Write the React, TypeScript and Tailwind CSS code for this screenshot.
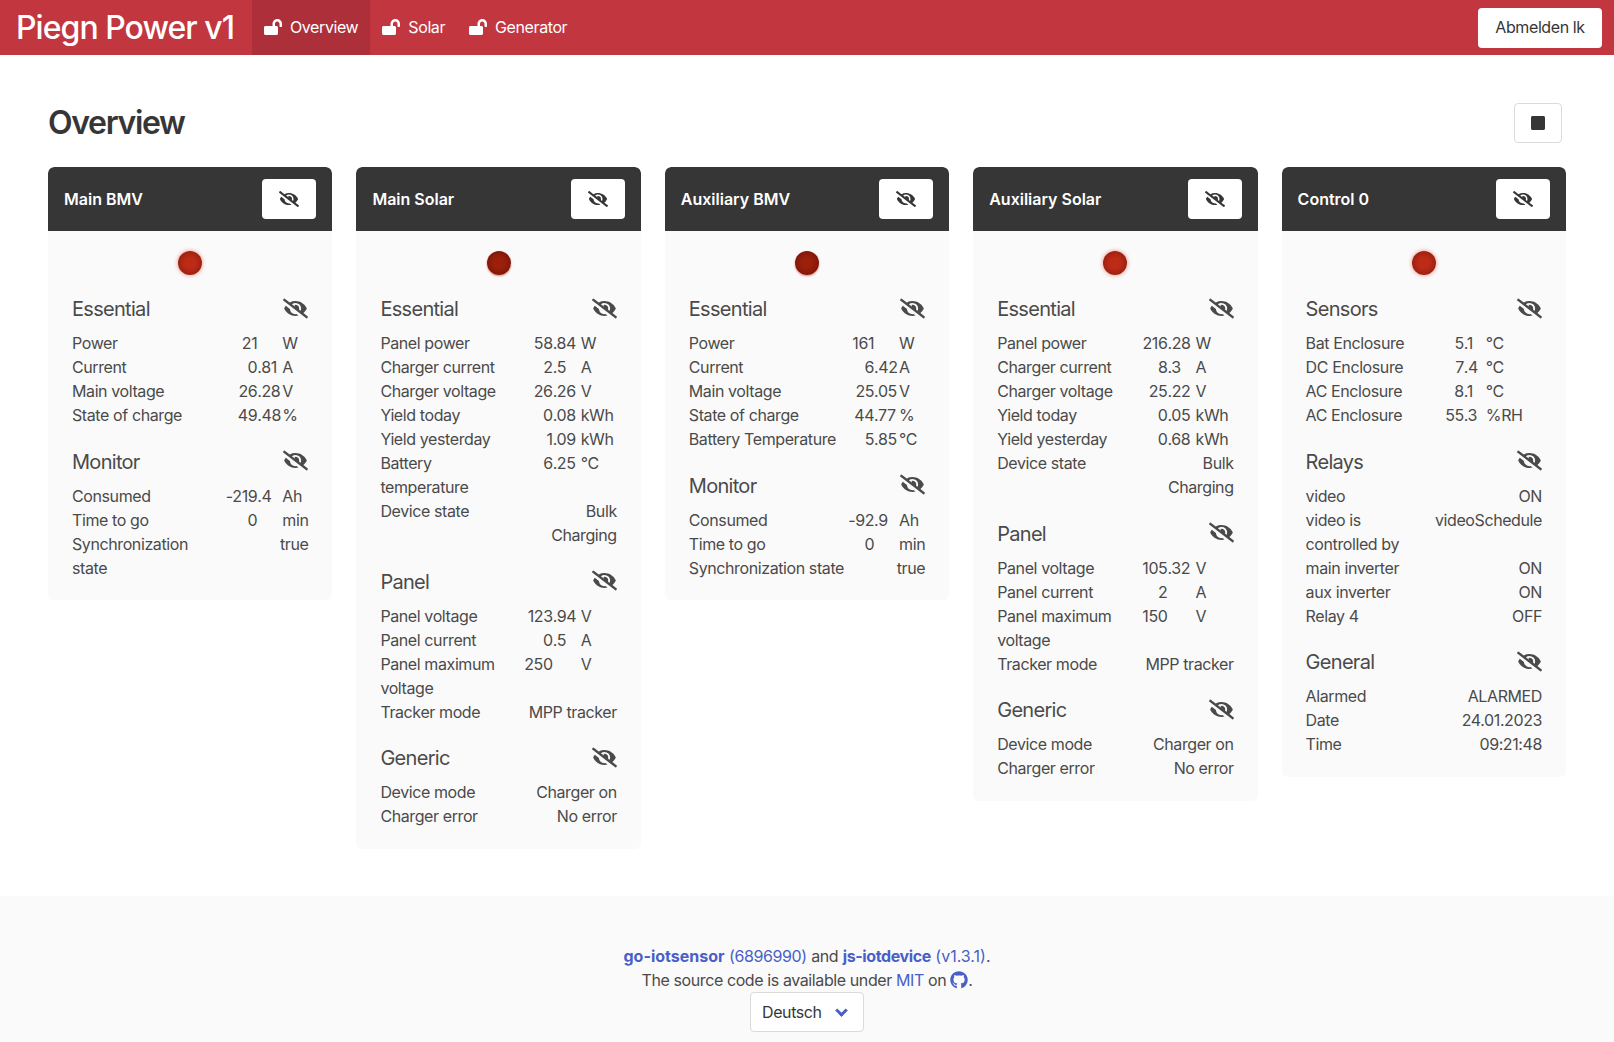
import React from 'react';
import { FaEyeSlash, FaGithub, FaLockOpen, FaStop } from 'react-icons/fa';

type Row = { label: string; value: string; unit?: string };
type Section = { title: string; rows: Row[] };
type Device = { name: string; led: string; cols: string[]; sections: Section[] };

const ledBright =
  'bg-[radial-gradient(circle_at_50%_50%,#bd2b17_30%,#86190d_100%)] shadow-[0_0_4px_rgba(225,70,50,0.65)]';
const ledDark =
  'bg-[radial-gradient(circle_at_50%_50%,#9c1f0a_30%,#6b140a_100%)] shadow-[0_1px_2px_rgba(235,90,70,0.8)]';

const devices: Device[] = [
  {
    name: 'Main BMV',
    led: ledBright,
    cols: ['w-[149px]', 'w-[36px]', 'w-[25px]', 'w-[26px]'],
    sections: [
      {
        title: 'Essential',
        rows: [
          { label: 'Power', value: '21', unit: 'W' },
          { label: 'Current', value: '0.81', unit: 'A' },
          { label: 'Main voltage', value: '26.28', unit: 'V' },
          { label: 'State of charge', value: '49.48', unit: '%' },
        ],
      },
      {
        title: 'Monitor',
        rows: [
          { label: 'Consumed', value: '-219.4', unit: 'Ah' },
          { label: 'Time to go', value: '0', unit: 'min' },
          { label: 'Synchronization state', value: 'true' },
        ],
      },
    ],
  },
  {
    name: 'Main Solar',
    led: ledDark,
    cols: ['w-[136px]', 'w-[36px]', 'w-[28px]', 'w-[36px]'],
    sections: [
      {
        title: 'Essential',
        rows: [
          { label: 'Panel power', value: '58.84', unit: 'W' },
          { label: 'Charger current', value: '2.5', unit: 'A' },
          { label: 'Charger voltage', value: '26.26', unit: 'V' },
          { label: 'Yield today', value: '0.08', unit: 'kWh' },
          { label: 'Yield yesterday', value: '1.09', unit: 'kWh' },
          { label: 'Battery temperature', value: '6.25', unit: '°C' },
          { label: 'Device state', value: 'Bulk\nCharging' },
        ],
      },
      {
        title: 'Panel',
        rows: [
          { label: 'Panel voltage', value: '123.94', unit: 'V' },
          { label: 'Panel current', value: '0.5', unit: 'A' },
          { label: 'Panel maximum voltage', value: '250', unit: 'V' },
          { label: 'Tracker mode', value: 'MPP tracker' },
        ],
      },
      {
        title: 'Generic',
        rows: [
          { label: 'Device mode', value: 'Charger on' },
          { label: 'Charger error', value: 'No error' },
        ],
      },
    ],
  },
  {
    name: 'Auxiliary BMV',
    led: ledDark,
    cols: ['w-[157px]', 'w-[28px]', 'w-[25px]', 'w-[26px]'],
    sections: [
      {
        title: 'Essential',
        rows: [
          { label: 'Power', value: '161', unit: 'W' },
          { label: 'Current', value: '6.42', unit: 'A' },
          { label: 'Main voltage', value: '25.05', unit: 'V' },
          { label: 'State of charge', value: '44.77', unit: '%' },
          { label: 'Battery Temperature', value: '5.85', unit: '°C' },
        ],
      },
      {
        title: 'Monitor',
        rows: [
          { label: 'Consumed', value: '-92.9', unit: 'Ah' },
          { label: 'Time to go', value: '0', unit: 'min' },
          { label: 'Synchronization state', value: 'true' },
        ],
      },
    ],
  },
  {
    name: 'Auxiliary Solar',
    led: ledBright,
    cols: ['w-[134px]', 'w-[36px]', 'w-[28px]', 'w-[38px]'],
    sections: [
      {
        title: 'Essential',
        rows: [
          { label: 'Panel power', value: '216.28', unit: 'W' },
          { label: 'Charger current', value: '8.3', unit: 'A' },
          { label: 'Charger voltage', value: '25.22', unit: 'V' },
          { label: 'Yield today', value: '0.05', unit: 'kWh' },
          { label: 'Yield yesterday', value: '0.68', unit: 'kWh' },
          { label: 'Device state', value: 'Bulk\nCharging' },
        ],
      },
      {
        title: 'Panel',
        rows: [
          { label: 'Panel voltage', value: '105.32', unit: 'V' },
          { label: 'Panel current', value: '2', unit: 'A' },
          { label: 'Panel maximum voltage', value: '150', unit: 'V' },
          { label: 'Tracker mode', value: 'MPP tracker' },
        ],
      },
      {
        title: 'Generic',
        rows: [
          { label: 'Device mode', value: 'Charger on' },
          { label: 'Charger error', value: 'No error' },
        ],
      },
    ],
  },
  {
    name: 'Control 0',
    led: ledBright,
    cols: ['w-[122px]', 'w-[36px]', 'w-[22px]', 'w-[56px]'],
    sections: [
      {
        title: 'Sensors',
        rows: [
          { label: 'Bat Enclosure', value: '5.1', unit: '°C' },
          { label: 'DC Enclosure', value: '7.4', unit: '°C' },
          { label: 'AC Enclosure', value: '8.1', unit: '°C' },
          { label: 'AC Enclosure', value: '55.3', unit: '%RH' },
        ],
      },
      {
        title: 'Relays',
        rows: [
          { label: 'video', value: 'ON' },
          { label: 'video is\ncontrolled by', value: 'videoSchedule' },
          { label: 'main inverter', value: 'ON' },
          { label: 'aux inverter', value: 'ON' },
          { label: 'Relay 4', value: 'OFF' },
        ],
      },
      {
        title: 'General',
        rows: [
          { label: 'Alarmed', value: 'ALARMED' },
          { label: 'Date', value: '24.01.2023' },
          { label: 'Time', value: '09:21:48' },
        ],
      },
    ],
  },
];

const DataRow = ({ row }: { row: Row }) => {
  if (!row.unit) {
    return (
      <tr>
        <td className="align-top whitespace-pre-line">{row.label}</td>
        <td colSpan={3} className="text-right align-top whitespace-pre-line">
          {row.value}
        </td>
      </tr>
    );
  }
  // numbers line up on the decimal point
  const [whole, fraction] = row.value.split('.');
  return (
    <tr>
      <td className="align-top">{row.label}</td>
      <td className="text-right align-top">{whole}</td>
      <td className="text-left align-top">{fraction ? `.${fraction}` : ''}</td>
      <td className="text-left align-top">{row.unit}</td>
    </tr>
  );
};

const DeviceCard = ({ device }: { device: Device }) => (
  <div className="overflow-hidden rounded-[6px] bg-[#fafafa]">
    <div className="flex h-16 items-center justify-between rounded-t-[6px] bg-[#363636] px-4">
      <span className="font-semibold text-white">{device.name}</span>
      <button className="flex h-10 w-[54px] items-center justify-center rounded-[4px] bg-white text-[#363636]">
        <FaEyeSlash size={20} />
      </button>
    </div>
    <div className="px-6 pt-5 pb-[20.5px]">
      <div className="flex justify-center">
        <div className={`h-6 w-6 rounded-full ${device.led}`} />
      </div>
      <div className="mt-[19px] flex flex-col gap-[19.5px]">
        {device.sections.map((section) => (
          <div key={section.title}>
            <div className="mb-[7px] flex h-[30px] items-center justify-between">
              <span className="text-xl tracking-[-0.035em]">{section.title}</span>
              <FaEyeSlash size={25} className="mb-[2px] text-[#4a4a4a]" />
            </div>
            <table className="w-full table-fixed border-collapse tracking-tight">
              <colgroup>
                {device.cols.map((col, i) => (
                  <col key={i} className={col} />
                ))}
              </colgroup>
              <tbody>
                {section.rows.map((row, i) => (
                  <DataRow key={i} row={row} />
                ))}
              </tbody>
            </table>
          </div>
        ))}
      </div>
    </div>
  </div>
);

const navItems = ['Overview', 'Solar', 'Generator'];

export default function App() {
  return (
    <div className="flex min-h-[1042px] flex-col bg-white font-['Inter',sans-serif] text-base leading-6 text-[#4a4a4a]">
      <nav className="flex h-[55px] items-stretch bg-[#c2363f] text-white">
        <div className="flex w-[252px] items-center pl-4 text-[32px] font-medium tracking-[-0.03em]">
          Piegn Power v1
        </div>
        {navItems.map((item, i) => (
          <a
            key={item}
            className={`flex items-center gap-2 px-3 pb-px tracking-tight ${i === 0 ? 'bg-[#ad2f39]' : ''}`}
          >
            <FaLockOpen size={18} />
            {item}
          </a>
        ))}
        <div className="ml-auto flex items-center pr-3">
          <button className="h-10 w-[124px] rounded-[4px] bg-white pb-px tracking-tight text-[#363636]">
            Abmelden lk
          </button>
        </div>
      </nav>

      <main className="flex-1 px-12 pt-12 pb-[47px]">
        <div className="mb-6 flex h-10 items-center justify-between pr-1">
          <h1 className="text-[32px] font-semibold tracking-[-0.042em] text-[#363636]">Overview</h1>
          <button className="flex h-10 w-12 items-center justify-center rounded-[4px] border border-[#dbdbdb] bg-white text-[#363636]">
            <FaStop size={16} />
          </button>
        </div>
        <div className="grid grid-cols-5 items-start gap-6">
          {devices.map((device) => (
            <DeviceCard key={device.name} device={device} />
          ))}
        </div>
      </main>

      <footer className="flex flex-col items-center bg-[#fafafa] pt-12 pb-[10px] text-center">
        <p>
          <a className="font-bold text-[#485fc7]">go-iotsensor</a>{' '}
          <a className="tracking-tight text-[#485fc7]">(6896990)</a>{' '}
          <span className="tracking-tight">and</span>{' '}
          <a className="font-bold tracking-tight text-[#485fc7]">js-iotdevice</a>{' '}
          <a className="text-[#485fc7]">(v1.3.1)</a>.
        </p>
        <p className="flex items-center tracking-tight">
          The source code is available under&nbsp;<a className="text-[#485fc7]">MIT</a>&nbsp;on&nbsp;
          <FaGithub size={18} className="text-[#485fc7]" />.
        </p>
        <div className="flex h-10 w-[114px] items-center justify-between rounded-[4px] border border-[#dbdbdb] bg-white pr-[17px] pl-[11px] tracking-tight text-[#363636]">
          Deutsch
          <span className="mb-[4px] h-[9px] w-[9px] rotate-[-45deg] border-b-[3px] border-l-[3px] border-[#485fc7]" />
        </div>
      </footer>
    </div>
  );
}
